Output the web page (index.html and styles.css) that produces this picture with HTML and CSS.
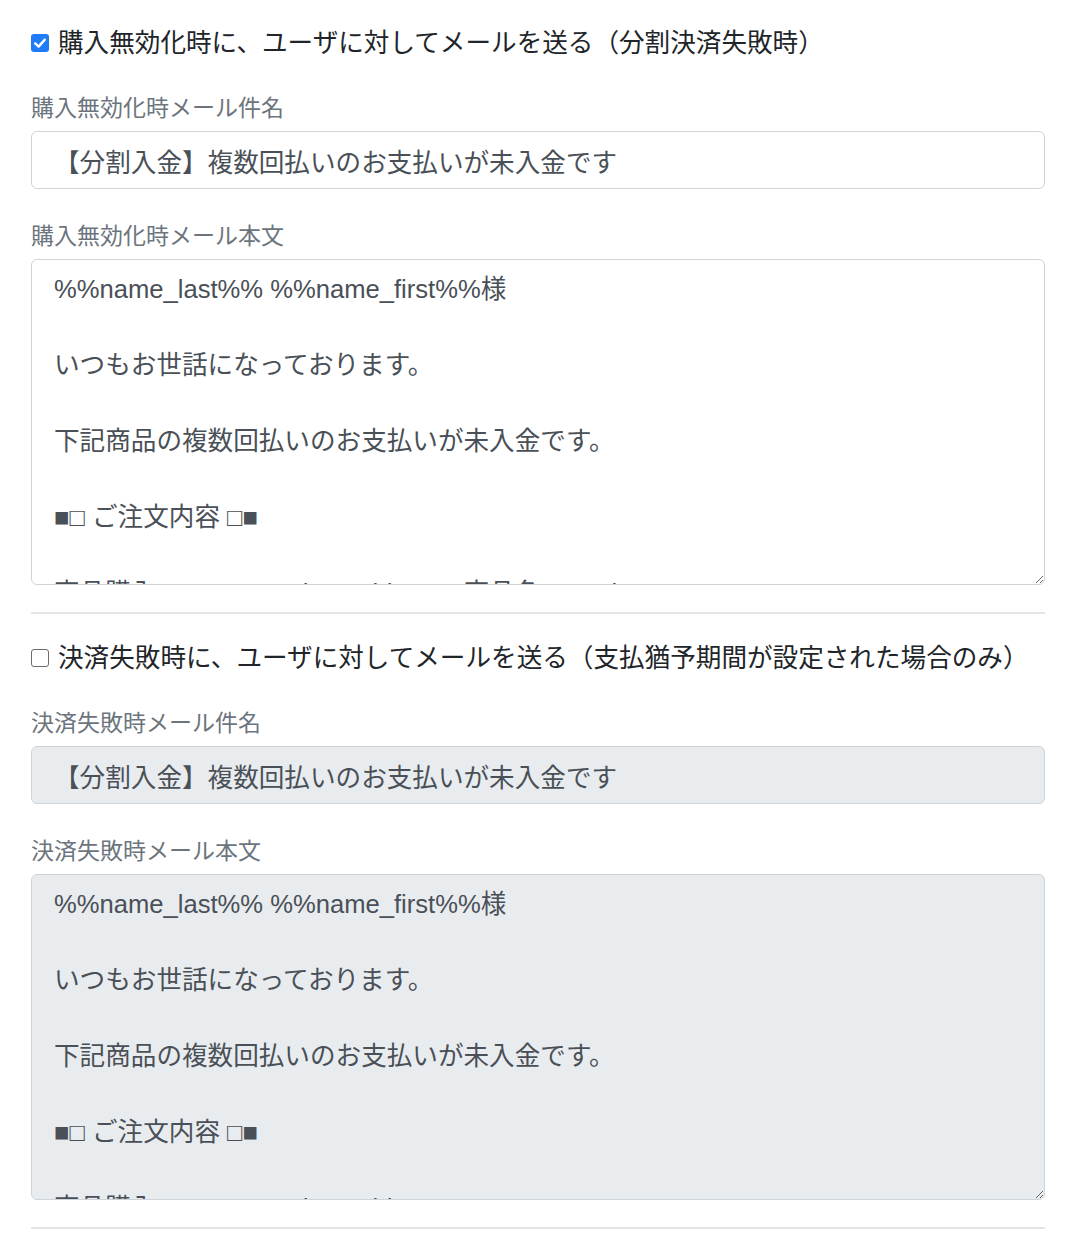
FILE: index.html
```html
<!DOCTYPE html>
<html lang="ja">
<head>
<meta charset="utf-8">
<title>メール設定</title>
<link rel="stylesheet" href="styles.css">
</head>
<body>
<div class="page">
  <section class="block">
    <label class="check-row">
      <span class="box box-on"><svg viewBox="0 0 18 18" width="18" height="18"><path d="M4.2 9.4 L7.6 12.6 L13.8 5.6" fill="none" stroke="#fff" stroke-width="2.4" stroke-linecap="round" stroke-linejoin="round"/></svg></span>
      <span class="check-text">購入無効化時に、ユーザに対してメールを送る（分割決済失敗時）</span>
    </label>
    <div class="group">
      <div class="label">購入無効化時メール件名</div>
      <input class="field" type="text" value="【分割入金】複数回払いのお支払いが未入金です">
    </div>
    <div class="group group-2">
      <div class="label">購入無効化時メール本文</div>
      <textarea class="field area">%%name_last%% %%name_first%%様

いつもお世話になっております。

下記商品の複数回払いのお支払いが未入金です。

■□ ご注文内容 □■

商品購入ID：%%purchase_id%%　商品名：%%item_name%%</textarea>
    </div>
  </section>
  <hr class="sep">
  <section class="block">
    <label class="check-row">
      <span class="box box-off"></span>
      <span class="check-text">決済失敗時に、ユーザに対してメールを送る（支払猶予期間が設定された場合のみ）</span>
    </label>
    <div class="group">
      <div class="label">決済失敗時メール件名</div>
      <input class="field" type="text" value="【分割入金】複数回払いのお支払いが未入金です" disabled>
    </div>
    <div class="group group-2">
      <div class="label">決済失敗時メール本文</div>
      <textarea class="field area" disabled>%%name_last%% %%name_first%%様

いつもお世話になっております。

下記商品の複数回払いのお支払いが未入金です。

■□ ご注文内容 □■

商品購入ID：%%purchase_id%%</textarea>
    </div>
  </section>
  <hr class="sep">
</div>
</body>
</html>
```

FILE: styles.css
```css
html, body {
  margin: 0;
  padding: 0;
  background: #fff;
}
body {
  font-family: "Liberation Sans", "Noto Sans CJK JP", sans-serif;
  font-size: 25.6px;
  line-height: 38px;
  color: #212529;
}
.page {
  width: 1014px;
  padding: 24px 0 0 31px;
}
.check-row {
  display: flex;
  align-items: center;
  height: 38px;
}
.box {
  width: 18px;
  height: 18px;
  box-sizing: border-box;
  border-radius: 3px;
  margin-right: 9px;
  flex: none;
  display: flex;
  align-items: center;
  justify-content: center;
}
.box-on {
  background: #1f7bf6;
}
.box-off {
  border: 1.5px solid #6b6b6b;
  background: #fff;
}
.check-text {
  white-space: nowrap;
}
.group {
  margin-top: 29px;
}
.group-2 {
  margin-top: 30px;
}
.label {
  font-size: 23px;
  line-height: 34px;
  color: #6c757d;
  margin-bottom: 6px;
}
.field {
  display: block;
  box-sizing: border-box;
  width: 1014px;
  height: 58px;
  margin: 0;
  padding: 9px 22px;
  border: 1.5px solid #ced4da;
  border-radius: 6px;
  background: #fff;
  font-family: "Liberation Sans", "Noto Sans CJK JP", sans-serif;
  font-size: 25.6px;
  line-height: 38px;
  color: #495057;
  outline: none;
}
.field:disabled {
  background: #e9ecef;
  color: #495057;
  opacity: 1;
  -webkit-text-fill-color: #495057;
}
.area {
  height: 326px;
  padding-top: 10px;
  resize: vertical;
  overflow: hidden;
}
.sep {
  margin: 27px 0 25px;
  border: 0;
  height: 2px;
  background: #e5e5e5;
  width: 1014px;
}
```
